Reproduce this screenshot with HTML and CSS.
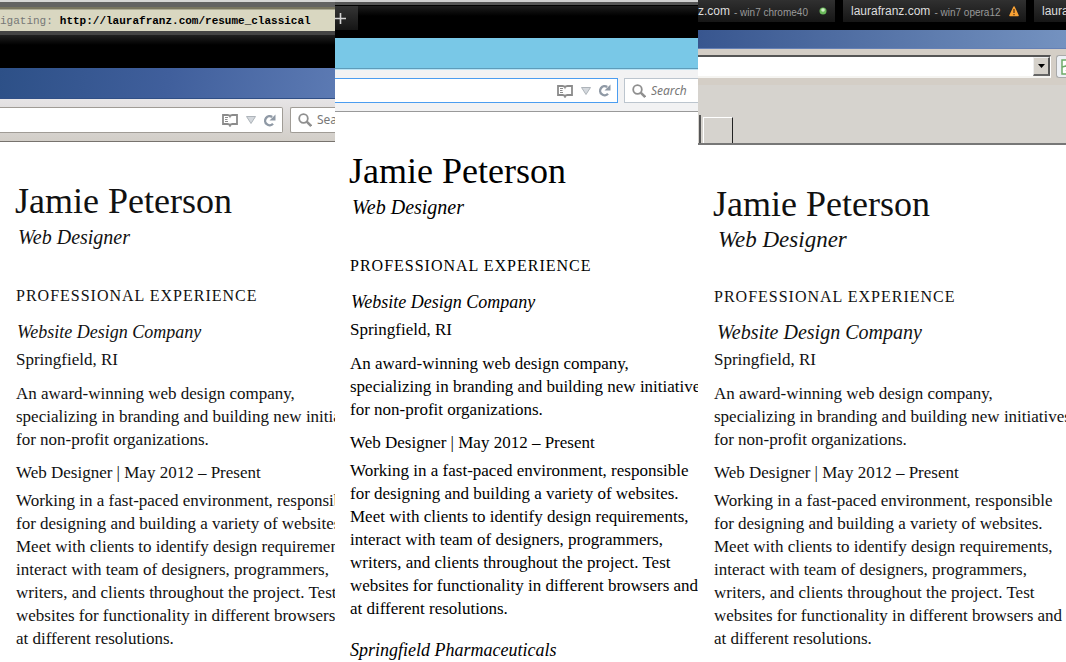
FILE: index.html
```html
<!DOCTYPE html>
<html lang="en">
<head>
<meta charset="utf-8">
<title>Browser comparison – Jamie Peterson resume</title>
<link rel="stylesheet" href="styles.css">
</head>
<body>
<svg class="defs" aria-hidden="true">
  <symbol id="book" viewBox="0 0 18 14">
    <path d="M2 2h4.500Q8.500 2 9 3.200 9.500 2 11.500 2H16v9h-4.500Q9.500 11 9 12.500 8.500 11 6.500 11H2z" fill="none" stroke="#8b8b8b" stroke-width="1.800"/>
    <path d="M4 4.500h3M4 6.500h2.500M4 8.500h3" stroke="#8b8b8b" fill="none"/>
  </symbol>
  <symbol id="down" viewBox="0 0 10 8">
    <path d="M.5.5h9L5 7.500z" fill="#d4d8dd" stroke="#aeb4ba"/>
  </symbol>
  <symbol id="reload" viewBox="0 0 13 13">
    <path d="M10 9.700A4.500 4.500 0 1 1 9.200 3" fill="none" stroke="#8f99a5" stroke-width="2.400"/>
    <path d="M12.500.5v6H6.500z" fill="#8f99a5"/>
  </symbol>
  <symbol id="search" viewBox="0 0 14 14">
    <circle cx="5.500" cy="5.500" r="4.300" fill="none" stroke="#8f8f8f" stroke-width="1.800"/>
    <path d="M8.700 8.700l4.500 4.300" stroke="#8f8f8f" stroke-width="2.500"/>
  </symbol>
</svg>
<main class="comparison">
  <section class="pane pane-xp" aria-label="Firefox on Windows XP">
    <div class="viewer-bar"><span class="viewer-label">igating:</span><a class="viewer-url" href="#">http://laurafranz.com/resume_classical</a></div>
    <div class="black-strip"></div>
    <div class="title-strip"></div>
    <div class="toolbar">
      <div class="address">
        <input class="address-input" type="text" aria-label="Address">
        <button class="icon-button" aria-label="Reader view"><svg width="18" height="14"><use href="#book"/></svg></button>
        <button class="icon-button" aria-label="History"><svg width="10" height="8"><use href="#down"/></svg></button>
        <button class="icon-button" aria-label="Reload"><svg width="13" height="13"><use href="#reload"/></svg></button>
      </div>
      <label class="search"><svg width="14" height="14"><use href="#search"/></svg><input class="search-input" type="text" placeholder="Search" aria-label="Search"></label>
    </div>
    <article class="resume">
      <h1 class="name">Jamie Peterson</h1>
      <p class="title">Web Designer</p>
      <h2 class="section">PROFESSIONAL EXPERIENCE</h2>
      <h3 class="company">Website Design Company</h3>
      <p class="place">Springfield, RI</p>
      <p class="about">An award-winning web design company,<br>specializing in branding and building new initiatives<br>for non-profit organizations.</p>
      <p class="role">Web Designer | May 2012 – Present</p>
      <p class="duties">Working in a fast-paced environment, responsible<br>for designing and building a variety of websites.<br>Meet with clients to identify design requirements,<br>interact with team of designers, programmers,<br>writers, and clients throughout the project. Test<br>websites for functionality in different browsers and<br>at different resolutions.</p>
    </article>
  </section>

  <section class="pane pane-w8" aria-label="Firefox on Windows 8">
    <div class="tab-strip"><button class="new-tab" aria-label="New tab"><svg width="11" height="11" viewBox="0 0 11 11"><path d="M5.500 0v11M0 5.500h11" stroke="#d4d4d4" stroke-width="1.600"/></svg></button></div>
    <div class="title-strip"></div>
    <div class="toolbar">
      <div class="address">
        <input class="address-input" type="text" aria-label="Address">
        <button class="icon-button" aria-label="Reader view"><svg width="18" height="14"><use href="#book"/></svg></button>
        <button class="icon-button" aria-label="History"><svg width="10" height="8"><use href="#down"/></svg></button>
        <button class="icon-button" aria-label="Reload"><svg width="13" height="13"><use href="#reload"/></svg></button>
      </div>
      <label class="search"><svg width="14" height="14"><use href="#search"/></svg><input class="search-input" type="text" placeholder="Search" aria-label="Search"></label>
    </div>
    <article class="resume">
      <h1 class="name">Jamie Peterson</h1>
      <p class="title">Web Designer</p>
      <h2 class="section">PROFESSIONAL EXPERIENCE</h2>
      <h3 class="company">Website Design Company</h3>
      <p class="place">Springfield, RI</p>
      <p class="about">An award-winning web design company,<br>specializing in branding and building new initiatives<br>for non-profit organizations.</p>
      <p class="role">Web Designer | May 2012 – Present</p>
      <p class="duties">Working in a fast-paced environment, responsible<br>for designing and building a variety of websites.<br>Meet with clients to identify design requirements,<br>interact with team of designers, programmers,<br>writers, and clients throughout the project. Test<br>websites for functionality in different browsers and<br>at different resolutions.</p>
      <h3 class="company next-company">Springfield Pharmaceuticals</h3>
    </article>
  </section>

  <section class="pane pane-ie" aria-label="Internet Explorer">
    <div class="session-tabs">
      <button class="session session-first"><span class="site">z.com</span><span class="browser">- win7 chrome40</span><svg class="status" width="8" height="8" viewBox="0 0 8 8"><circle cx="4" cy="4" r="3.500" fill="#69b85a"/><circle cx="4" cy="3" r="1.800" fill="#d2f0c8"/></svg></button>
      <button class="session session-second"><span class="site">laurafranz.com</span><span class="browser">- win7 opera12</span><svg class="status" width="10" height="11" viewBox="0 0 10 11"><path d="M5 1L9 9.500H1z" fill="#f9a234" stroke="#f9a234" stroke-width="1.600" stroke-linejoin="round"/><path d="M5 3v4M5 8v1.200" stroke="#59371a" stroke-width="1.300"/></svg></button>
      <button class="session session-third"><span class="site">laurafranz.com</span></button>
    </div>
    <div class="title-strip"></div>
    <div class="ie-bar">
      <div class="combo"><input class="address-input" type="text" aria-label="Address"><button class="drop" aria-label="Show addresses"><svg width="7" height="4" viewBox="0 0 7 4"><path d="M0 0h7L3.500 4z"/></svg></button></div>
      <button class="compat" aria-label="Compatibility view"><svg width="12" height="16" viewBox="0 0 12 16"><path d="M1 1h10v14H1z" fill="#fff" stroke="#6eaa67" stroke-width="1.500"/><path d="M1 8l4-1 3-5M5 12l4-4h3" fill="none" stroke="#6eaa67" stroke-width="1.500"/></svg></button>
    </div>
    <div class="ie-tabs"><span class="ie-tab-edge"></span><button class="ie-tab" aria-label="New tab"></button></div>
    <article class="resume">
      <h1 class="name">Jamie Peterson</h1>
      <p class="title">Web Designer</p>
      <h2 class="section">PROFESSIONAL EXPERIENCE</h2>
      <h3 class="company">Website Design Company</h3>
      <p class="place">Springfield, RI</p>
      <p class="about">An award-winning web design company,<br>specializing in branding and building new initiatives<br>for non-profit organizations.</p>
      <p class="role">Web Designer | May 2012 – Present</p>
      <p class="duties">Working in a fast-paced environment, responsible<br>for designing and building a variety of websites.<br>Meet with clients to identify design requirements,<br>interact with team of designers, programmers,<br>writers, and clients throughout the project. Test<br>websites for functionality in different browsers and<br>at different resolutions.</p>
    </article>
  </section>
</main>
</body>
</html>
```
FILE: styles.css
```css
* { box-sizing: border-box; }
body { margin: 0; background: #fff; color: #111; overflow-x: hidden; }
button, input { margin: 0; padding: 0; border: 0; border-radius: 0; background: none; font: inherit; color: inherit; outline: 0; min-width: 0; }
svg { display: block; flex: none; }
.defs { display: none; }

.comparison { display: grid; grid-template-columns: 335fr 363fr 368fr; }
.pane { min-width: 0; overflow: hidden; background: #fff; }

/* Resume page */
.resume { padding: 37px 0 0 16px; font: 17px/23px "Liberation Serif", serif; white-space: nowrap; }
.resume h1, .resume h2, .resume h3, .resume p { margin: 0; font-weight: 400; }
.resume .name { font-size: 36px; line-height: 44px; margin-left: -1px; }
.resume .title { padding-left: 2px; font-size: 20px; line-height: 28px; font-style: italic; }
.resume .section { margin-top: 33px; font-size: 16px; line-height: 24px; letter-spacing: 1px; }
.resume .company { margin-top: 12px; padding-left: 1px; font-size: 18px; line-height: 24px; font-style: italic; }
.resume .place { margin-top: 4px; }
.resume .about { margin-top: 11px; }
.resume .role { margin-top: 10px; }
.resume .duties { margin-top: 5px; }
.resume .next-company { margin-top: 18px; padding-left: 0; }
.pane-w8 .resume { padding-left: 15px; color: #000; }
.pane-ie .title { font-size: 23px; padding-left: 4px; }
.pane-ie .section { margin-top: 31px; }
.pane-ie .company { margin-top: 11px; font-size: 20px; padding-left: 3px; }

/* Firefox toolbars */
.toolbar { display: flex; gap: 7px; }
.address { flex: 1; min-width: 0; display: flex; align-items: center; gap: 7px; padding-right: 6px; background: #fff; }
.address-input { flex: 1; align-self: stretch; }
.icon-button { display: flex; }
.search { display: flex; align-items: center; gap: 5px; padding-left: 7px; background: #fff; overflow: hidden; }
.search-input { flex: 1; width: 0; font: 12px/16px "Noto Sans", sans-serif; }
.search-input::placeholder { color: #777; opacity: 1; }

/* Windows XP pane */
.viewer-bar { display: flex; align-items: center; gap: 7px; height: 35px; border-top: 2px solid #d6d6d6; border-bottom: 4px solid #444; background: linear-gradient(#626262 0 5px, #77745f 5px 7px, #aaa893 7px 8px, #d9d7c1 8px); padding-top: 8px; font: 11px/16px "Liberation Mono", monospace; white-space: nowrap; }
.viewer-label { color: #777; }
.viewer-url { color: #000; font-weight: 700; text-decoration: none; }
.black-strip { height: 33px; background: linear-gradient(#202020, #000 10px); }
.pane-xp .title-strip { height: 31px; border-bottom: 1px solid #304f86; background: linear-gradient(100deg, #2d5087, #405f9c 50%, #5c7ab3); }
.pane-xp .toolbar { height: 43px; padding: 8px 0 8px; border-bottom: 1px solid #77736e; background: linear-gradient(#e6e4e6, #d2cec8); }
.pane-xp .address { border: 1px solid #a09c96; border-left: 0; border-radius: 0 2px 2px 0; }
.pane-xp .search { flex: 0 0 45px; border: 1px solid #a09c96; border-right: 0; border-radius: 2px 0 0 2px; }

/* Windows 8 pane */
.tab-strip { height: 38px; border-top: 2px solid #d0d0d0; background: linear-gradient(#555 0 3px, #000 3px 4px, #1c1c1c 4px, #000 14px); padding-top: 4px; }
.new-tab { display: flex; align-items: center; width: 23px; height: 24px; background: linear-gradient(#353535, #151515); }
.pane-w8 .title-strip { height: 31px; border-bottom: 1px solid #5e9cba; background: #79c8e7; }
.pane-w8 .toolbar { gap: 6px; height: 43px; padding: 8px 0; border-top: 1px solid #b9e2f3; border-bottom: 1px solid #999; background: #f2f2f3; }
.pane-w8 .address { border: 1px solid #4b9df0; border-left: 0; }
.pane-w8 .search { flex: 0 0 74px; border: 1px solid #bcc5ce; border-right: 0; }
.pane-w8 .search-input { font-style: italic; }

/* Internet Explorer pane */
.session-tabs { display: flex; align-items: flex-start; gap: 8px; height: 30px; background: #000; white-space: nowrap; overflow: hidden; }
.session { display: flex; align-items: center; gap: 4px; height: 22px; background: linear-gradient(#303030, #161616); font-family: "Liberation Sans", sans-serif; }
.site { color: #ddd; font-size: 12px; line-height: 16px; }
.browser { color: #999; font-size: 10px; line-height: 16px; padding-top: 3px; }
.status { margin-left: auto; }
.session-first { flex: 0 0 137px; padding-right: 8px; }
.session-second { flex: 0 0 183px; padding: 0 7px 0 8px; }
.session-third { flex: 1 0 auto; padding-left: 8px; }
.pane-ie .title-strip { height: 19px; border-bottom: 1px solid #6580b5; background: linear-gradient(90deg, #38568f, #7492c0); }
.ie-bar { display: flex; gap: 5px; height: 36px; padding: 6px 0 7px; background: #d4cec6; }
.combo { flex: 1; min-width: 0; display: flex; border: 2px solid #555; border-left: 0; border-right: 1px solid #fff; border-bottom-color: #f5f4f1; background: #fff; }
.drop { width: 17px; display: flex; align-items: center; justify-content: center; background: #d5d1ca; border: 1px solid #eee; border-right: 2px solid #555; border-bottom: 2px solid #666; }
.compat { display: flex; align-items: center; width: 10px; padding-left: 4px; border: 1px solid #aaa; border-right: 0; border-radius: 3px 0 0 3px; background: #edf0f5; overflow: hidden; }
.ie-tabs { display: flex; align-items: flex-end; gap: 2px; height: 60px; border-bottom: 2px solid #777; background: #d6d3ce; }
.ie-tab-edge { width: 3px; height: 28px; border-right: 2px solid #555; }
.ie-tab { width: 30px; height: 26px; border: 1px solid #fff; border-right: 1px solid #222; border-bottom: 0; }
```
